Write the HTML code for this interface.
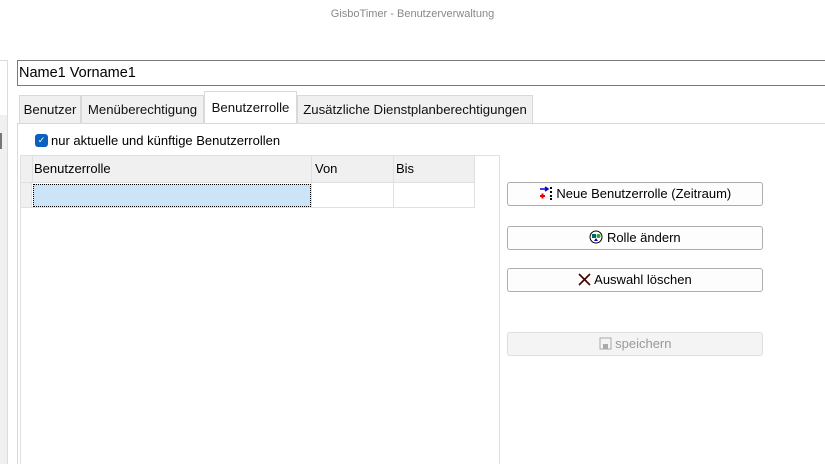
<!DOCTYPE html>
<html><head><meta charset="utf-8"><style>
*{box-sizing:border-box;margin:0;padding:0}
body{width:825px;height:464px;background:#fff;font-family:"Liberation Sans",sans-serif;font-size:13px;color:#000;position:relative;overflow:hidden}
.a{position:absolute}
.tab{position:absolute;top:95px;height:28px;background:#f0f0f0;border:1px solid #d9d9d9;border-bottom:none;line-height:27px;font-size:13.2px;text-align:center;color:#111;white-space:nowrap}
.btn{position:absolute;left:507px;width:256px;height:24px;border:1px solid #adadad;border-radius:3px;background:#fdfdfd;text-align:center;line-height:22px;font-size:13px}
</style></head><body>
<div class="a" style="left:0;top:0;width:825px;height:30px;text-align:center;line-height:28px;font-size:11px;color:#888">GisboTimer - Benutzerverwaltung</div>
<div class="a" style="left:0;top:60px;width:8px;height:404px;border-right:1px solid #dcdcdc;background:#f0f0f0"></div>
<div class="a" style="left:0;top:60px;width:8px;height:55px;background:#fff;border-top:1px solid #dcdcdc;border-right:1px solid #dcdcdc"></div>
<div class="a" style="left:0;top:133px;width:2px;height:16px;background:#777"></div>
<div class="a" style="left:17px;top:60px;width:812px;height:26px;border:1px solid #7a7a7a;font-size:14.5px;line-height:24px;padding-left:1px">Name1 Vorname1</div>
<div class="tab" style="left:19px;width:62px">Benutzer</div>
<div class="tab" style="left:81px;width:123px">Menüberechtigung</div>
<div class="tab" style="left:204px;top:91px;height:33px;width:93px;background:#fff;line-height:32px">Benutzerrolle</div>
<div class="tab" style="left:297px;width:236px">Zusätzliche Dienstplanberechtigungen</div>
<div class="a" style="left:17px;top:123px;width:808px;height:341px;border-top:1px solid #d9d9d9;border-left:1px solid #d9d9d9"></div>
<div class="a" style="left:35px;top:134px;width:13px;height:13px;background:#0a5fbf;border-radius:3px;color:#fff;font-size:9px;line-height:13px;text-align:center">✓</div>
<div class="a" style="left:51px;top:133px;font-size:13px">nur aktuelle und künftige Benutzerrollen</div>
<div class="a" style="left:20px;top:155px;width:480px;height:309px;border:1px solid #e0e0e0;border-bottom:none"></div>
<div class="a" style="left:21px;top:156px;width:453px;height:27px;background:#f0f0f0;border-bottom:1px solid #e0e0e0"></div>
<div class="a" style="left:21px;top:183px;width:11px;height:25px;background:#f0f0f0;border-right:1px solid #e0e0e0;border-bottom:1px solid #e0e0e0"></div>
<div class="a" style="left:32px;top:156px;width:1px;height:27px;background:#e0e0e0"></div>
<div class="a" style="left:311px;top:156px;width:1px;height:52px;background:#e0e0e0"></div>
<div class="a" style="left:393px;top:156px;width:1px;height:52px;background:#e0e0e0"></div>
<div class="a" style="left:474px;top:156px;width:1px;height:52px;background:#e0e0e0"></div>
<div class="a" style="left:32px;top:207px;width:442px;height:1px;background:#e0e0e0"></div>
<div class="a" style="left:34px;top:161px">Benutzerrolle</div>
<div class="a" style="left:315px;top:161px">Von</div>
<div class="a" style="left:396px;top:161px">Bis</div>
<div class="a" style="left:33px;top:184px;width:278px;height:23px;background:#cce4f7;border:1px dotted #000"></div>
<div class="btn" style="top:182px"><svg width="14" height="14" style="vertical-align:-2px"><path d="M1 3h8M6 1l3 2-3 2" stroke="#00c" stroke-width="1.5" fill="none"/><path d="M1 10h5M3.5 7.5v5" stroke="#e00" stroke-width="2"/><path d="M12 1v2M12 5v2M12 9v2M12 12v2" stroke="#000" stroke-width="2"/></svg> Neue Benutzerrolle (Zeitraum)</div>
<div class="btn" style="top:226px"><svg width="14" height="14" style="vertical-align:-2px"><circle cx="7" cy="7" r="6" fill="#fff" stroke="#000"/><rect x="3" y="4" width="4" height="4" fill="#066"/><circle cx="9.5" cy="6" r="2" fill="#2a2"/><path d="M5 11l2-3 2 3z" fill="#00c"/></svg> Rolle ändern</div>
<div class="btn" style="top:268px"><svg width="13" height="13" style="vertical-align:-2px"><path d="M1 1l11 11M12 1L1 12" stroke="#400" stroke-width="1.6"/></svg> Auswahl löschen</div>
<div class="btn" style="top:332px;background:#f4f4f4;border-color:#dedede;color:#999"><svg width="13" height="13" style="vertical-align:-2px"><rect x="1" y="1" width="11" height="11" fill="none" stroke="#aaa"/><rect x="4" y="7" width="5" height="5" fill="#aaa"/></svg> speichern</div>
</body></html>
